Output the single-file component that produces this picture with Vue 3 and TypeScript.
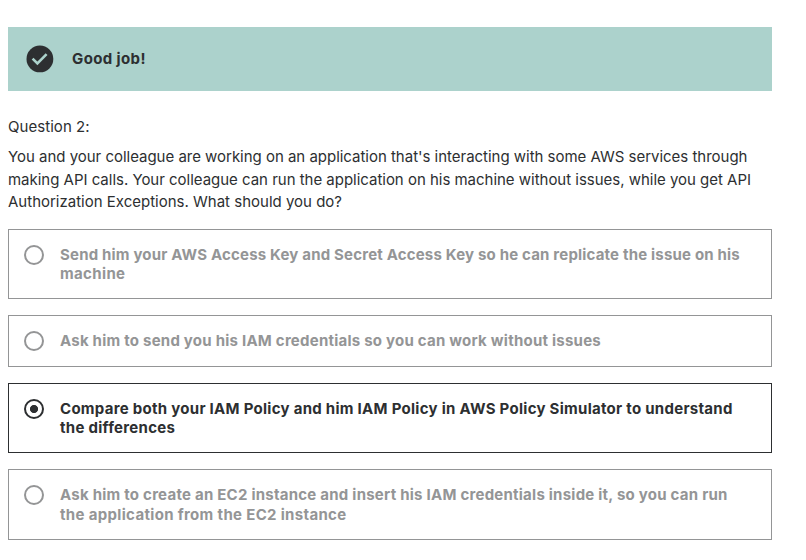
<script setup lang="ts">
import { ref } from 'vue'

interface Line { text: string; tracking: number }

const answers: Line[][] = [
  [
    { text: 'Send him your AWS Access Key and Secret Access Key so he can replicate the issue on his', tracking: 0.185 },
    { text: 'machine', tracking: 0.35 },
  ],
  [{ text: 'Ask him to send you his IAM credentials so you can work without issues', tracking: 0.235 }],
  [
    { text: 'Compare both your IAM Policy and him IAM Policy in AWS Policy Simulator to understand', tracking: 0.28 },
    { text: 'the differences', tracking: 0.28 },
  ],
  [
    { text: 'Ask him to create an EC2 instance and insert his IAM credentials inside it, so you can run', tracking: 0.24 },
    { text: 'the application from the EC2 instance', tracking: 0.33 },
  ],
]
const question: Line[] = [
  { text: "You and your colleague are working on an application that's interacting with some AWS services through", tracking: -0.02 },
  { text: 'making API calls. Your colleague can run the application on his machine without issues, while you get API', tracking: -0.02 },
  { text: 'Authorization Exceptions. What should you do?', tracking: 0 },
]
const selected = ref(2)
</script>

<template>
  <main class="quiz">
    <div class="banner">
      <svg class="check" viewBox="0 0 28 28">
        <circle cx="13.9" cy="13.9" r="13.4" fill="#2d2f31" />
        <path d="M6.6 13.7l4.8 4.8 9.2-9.4" fill="none" stroke="#acd2cc" stroke-width="2.6" />
      </svg>
      <span class="praise">Good job!</span>
    </div>
    <div class="label"><span>Question 2:</span></div>
    <div class="prompt">
      <div v-for="(line, i) in question" :key="i"><span :style="{ letterSpacing: line.tracking + 'px' }">{{ line.text }}</span></div>
    </div>
    <ul class="answers">
      <li v-for="(lines, i) in answers" :key="i" class="answer" :class="{ selected: i === selected }">
        <span class="radio"></span>
        <div class="text">
          <div v-for="(line, j) in lines" :key="j"><span :style="{ letterSpacing: line.tracking + 'px' }">{{ line.text }}</span></div>
        </div>
      </li>
    </ul>
  </main>
</template>

<style>
body { background: #fff; }
</style>
<style scoped>
.quiz { width: 764px; padding: 27px 0 0 8px; color: #2d2f31; font-family: Inter, "Liberation Sans", sans-serif; white-space: nowrap; }
.banner { height: 64px; background: #acd2cc; display: flex; align-items: center; padding-left: 18px; box-sizing: border-box; }
.check { width: 28px; height: 28px; margin-right: 18px; }
.praise { font-size: 15px; font-weight: 700; letter-spacing: 0.38px; padding-bottom: 2px; }
.label { margin-top: 25px; font-size: 15px; line-height: 22px; letter-spacing: 0.05px; }
.prompt { margin-top: 8px; font-size: 15px; line-height: 22.5px; }
.answers { list-style: none; margin: 15.1px 0 0; padding: 0; display: flex; flex-direction: column; gap: 16px; }
.answer { display: flex; box-sizing: border-box; border: 1px solid #949596; padding: 15px; color: #949596; }
.radio { box-sizing: border-box; width: 20px; height: 20px; border: 2px solid currentColor; border-radius: 50%; margin-right: 16px; flex: none; }
.text { font-size: 15px; line-height: 19.2px; font-weight: 700; }
.selected { color: #2d2f31; border-color: #2d2f31; }
.selected .radio { background: radial-gradient(circle, #2d2f31 0 3.7px, transparent 4.4px); }
</style>
